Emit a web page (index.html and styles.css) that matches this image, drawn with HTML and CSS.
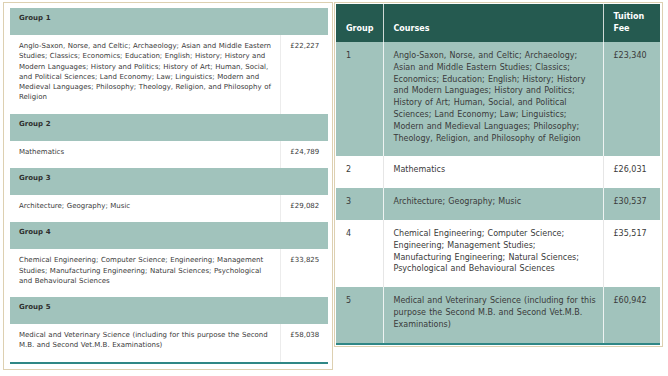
FILE: index.html
```html
<!DOCTYPE html>
<html lang="en">
<head>
<meta charset="utf-8">
<title>Tuition fees</title>
<link rel="stylesheet" href="styles.css">
</head>
<body>
<div class="wrap">
  <div class="panel panel-left">
    <table class="fees-a">
      <colgroup><col class="c-course"><col class="c-fee"></colgroup>
      <tbody>
        <tr class="grp"><th colspan="2">Group 1</th></tr>
        <tr><td>Anglo-Saxon, Norse, and Celtic; Archaeology; Asian and Middle Eastern Studies; Classics; Economics; Education; English; History; History and Modern Languages; History and Politics; History of Art; Human, Social, and Political Sciences; Land Economy; Law; Linguistics; Modern and Medieval Languages; Philosophy; Theology, Religion, and Philosophy of Religion</td><td class="fee">£22,227</td></tr>
        <tr class="grp"><th colspan="2">Group 2</th></tr>
        <tr><td>Mathematics</td><td class="fee">£24,789</td></tr>
        <tr class="grp"><th colspan="2">Group 3</th></tr>
        <tr><td>Architecture; Geography; Music</td><td class="fee">£29,082</td></tr>
        <tr class="grp"><th colspan="2">Group 4</th></tr>
        <tr><td>Chemical Engineering; Computer Science; Engineering; Management Studies; Manufacturing Engineering; Natural Sciences; Psychological and Behavioural Sciences</td><td class="fee">£33,825</td></tr>
        <tr class="grp"><th colspan="2">Group 5</th></tr>
        <tr><td>Medical and Veterinary Science (including for this purpose the Second M.B. and Second Vet.M.B. Examinations)</td><td class="fee">£58,038</td></tr>
      </tbody>
    </table>
  </div>
  <div class="panel panel-right">
    <table class="fees-b">
      <colgroup><col class="c-grp"><col class="c-courses"><col class="c-tuition"></colgroup>
      <thead>
        <tr><th>Group</th><th>Courses</th><th>Tuition Fee</th></tr>
      </thead>
      <tbody>
        <tr class="alt"><td>1</td><td>Anglo-Saxon, Norse, and Celtic; Archaeology; Asian and Middle Eastern Studies; Classics; Economics; Education; English; History; History and Modern Languages; History and Politics; History of Art; Human, Social, and Political Sciences; Land Economy; Law; Linguistics; Modern and Medieval Languages; Philosophy; Theology, Religion, and Philosophy of Religion</td><td>£23,340</td></tr>
        <tr><td>2</td><td>Mathematics</td><td>£26,031</td></tr>
        <tr class="alt"><td>3</td><td>Architecture; Geography; Music</td><td>£30,537</td></tr>
        <tr><td>4</td><td>Chemical Engineering; Computer Science; Engineering; Management Studies;<br>Manufacturing Engineering; Natural Sciences; Psychological and Behavioural Sciences</td><td>£35,517</td></tr>
        <tr class="alt"><td>5</td><td>Medical and Veterinary Science (including for this purpose the Second M.B. and Second Vet.M.B. Examinations)</td><td>£60,942</td></tr>
      </tbody>
    </table>
  </div>
</div>
</body>
</html>
```

FILE: styles.css
```css
html, body {
  margin: 0;
  background: #ffffff;
}
body {
  font-family: "DejaVu Sans", Verdana, sans-serif;
  color: #3a3a3a;
}
.wrap {
  display: flex;
  align-items: flex-start;
  gap: 1px;
  padding: 2px 0 0 3px;
}
.panel {
  box-sizing: border-box;
  border: 1px solid #ddd0b1;
  background: #fff;
}
.panel-left {
  width: 330px;
  padding: 5px 4px 5px 6px;
}
.panel-right {
  width: 329px;
  padding: 1px 2px 1px 1px;
}
table {
  border-collapse: collapse;
  table-layout: fixed;
  width: 100%;
}
/* left table */
.fees-a {
  font-size: 7px;
  line-height: 10.3px;
  word-spacing: 0.3px;
  border-bottom: 2px solid #2f8786;
}
.fees-a .c-course { width: 270px; }
.fees-a .c-fee { width: 47px; }
.fees-a th {
  background: #a1c3bc;
  text-align: left;
  font-weight: bold;
  color: #2e2e2e;
  padding: 5px 10px 11.7px 9px;
}
.fees-a td {
  vertical-align: top;
  padding: 6px 6px 11px 9px;
  background: #fff;
}
.fees-a td.fee {
  border-left: 1px solid #ececec;
  padding-left: 9px;
  padding-right: 2px;
}
/* right table */
.fees-b {
  font-size: 8px;
  line-height: 11.8px;
  word-spacing: 0.6px;
  border-bottom: 2px solid #2f8786;
}
.fees-b .c-grp { width: 47px; }
.fees-b .c-courses { width: 220px; }
.fees-b .c-tuition { width: 57px; }
.fees-b th {
  background: #255a50;
  color: #fff;
  font-weight: bold;
  text-align: left;
  vertical-align: bottom;
  line-height: 12px;
  word-spacing: 0;
  padding: 7px 4px 7px 10px;
}
.fees-b th + th {
  border-left: 1px solid #cfd8d5;
}
.fees-b td {
  vertical-align: top;
  padding: 8px 4px 12px 10px;
  background: #fff;
}
.fees-b td + td {
  border-left: 1px solid #e6e6e6;
}
.fees-b tr.alt td {
  background: #a1c3bc;
}
.fees-b tr.alt td + td {
  border-left-color: #eef3f2;
}
```
